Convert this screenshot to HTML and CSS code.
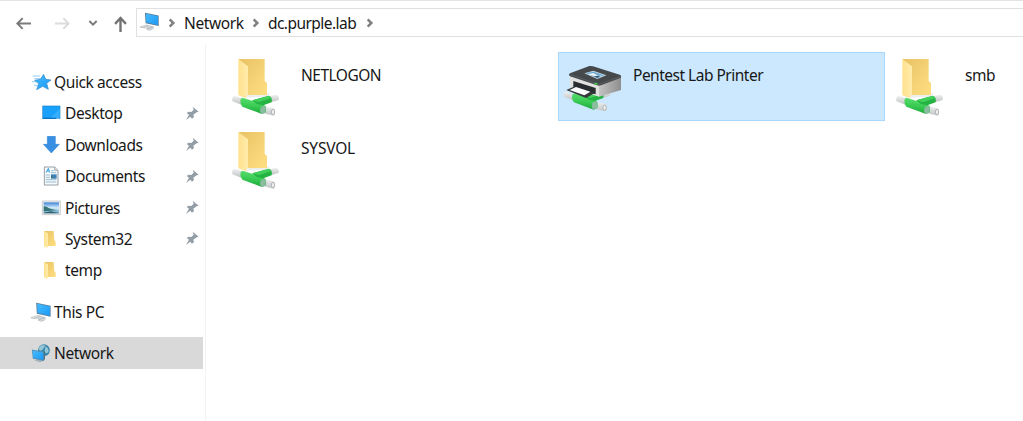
FILE: index.html
```html
<!DOCTYPE html>
<html lang="en">
<head>
<meta charset="utf-8">
<title>dc.purple.lab</title>
<link rel="stylesheet" href="styles.css">
</head>
<body>
<svg class="defs" aria-hidden="true">
  <defs>
    <linearGradient id="gold" x1="0" y1="0" x2="1" y2="1"><stop offset="0" stop-color="#e8c264"/><stop offset="1" stop-color="#ffdf83"/></linearGradient>
    <linearGradient id="flap" x1="0" y1="0" x2="1" y2="0"><stop offset="0" stop-color="#ffe18c"/><stop offset="1" stop-color="#ffebac"/></linearGradient>
    <linearGradient id="blue" x1="0" y1="0" x2="1" y2="1"><stop offset="0" stop-color="#46bdff"/><stop offset="1" stop-color="#1b98f5"/></linearGradient>
    <linearGradient id="green" x1=".55" y1="0" x2=".4" y2="1"><stop offset="0" stop-color="#5ddf72"/><stop offset=".5" stop-color="#3acc54"/><stop offset="1" stop-color="#19a43a"/></linearGradient>
    <linearGradient id="pipe" x1="0" y1="0" x2="0" y2="1"><stop offset="0" stop-color="#f0f0f0"/><stop offset="1" stop-color="#c0c4c5"/></linearGradient>
    <linearGradient id="sky" x1="0" y1="0" x2="0" y2="1"><stop offset="0" stop-color="#3d83da"/><stop offset=".5" stop-color="#d5edfa"/><stop offset="1" stop-color="#5e9fc0"/></linearGradient>
    <linearGradient id="side" x1="0" y1="0" x2="1" y2="0"><stop offset="0" stop-color="#c4c4c4"/><stop offset="1" stop-color="#8e8e8e"/></linearGradient>
  </defs>
  <symbol id="pin" viewBox="495 136 42 45">
    <path d="M518 138L536 153L530 155L520 162L522 169L516 174L511 168L498 178L507 162L500 157L506 153L514 154L521 147Z" fill="#929da6"/>
  </symbol>
  <symbol id="pipes" viewBox="30 143 150 72">
    <path d="M150 153L169 149Q180 154 176 165L155 171Z" fill="url(#pipe)"/>
    <path d="M66 160L43 152Q34 156 37 169L64 179Z" fill="url(#pipe)"/>
    <path d="M130 183L162 190Q169 199 162 212L127 204Z" fill="url(#pipe)"/>
    <ellipse cx="159" cy="201" rx="5" ry="8" fill="#eee" stroke="#b2b6b8" stroke-width="3"/>
    <path d="M68 158L132 179Q141 185 137 202L126 207L67 185Q59 176 62 162Z" fill="url(#green)"/>
    <path d="M96 166L147 152Q158 157 155 172L130 181L112 178Z" fill="#25b443"/>
    <path d="M98 166L147 152L154 159L116 172Z" fill="#43cf5b"/>
    <path d="M122 188Q126 180 138 184L136 203L126 207Q117 201 122 188Z" fill="#8abca0"/>
  </symbol>
  <symbol id="shared" viewBox="30 33 156 186">
    <path d="M72 146L149 145L142 155L80 158Z" fill="#eee"/>
    <path d="M56 42H134V107L141 115V150H84L56 42Z" fill="url(#gold)"/>
    <path d="M55 42L84 64V145L78 160L55 151Z" fill="url(#flap)"/>
    <use href="#pipes" x="30" y="143" width="150" height="72"/>
  </symbol>
  <symbol id="pc" viewBox="30 35 64 58">
    <path d="M31 80L53 73L76 80L74 87L63 92L53 89L54 85L34 83Z" fill="#bcc1c5"/>
    <path d="M38 81L54 76M47 84L65 79M58 89L73 84" stroke="#edf0f1" stroke-width="2" fill="none"/>
    <path d="M48 37L90 46V78L50 69Z" fill="#567f9b"/>
    <path d="M51 40L88 48V75L52 66Z" fill="url(#blue)"/>
  </symbol>
  <symbol id="folder" viewBox="69 205 42 60">
    <path d="M73 211H101L103 238L107 243V256H83Z" fill="url(#gold)"/>
    <path d="M72 211L84 218V257L81 262L72 256Z" fill="url(#flap)"/>
  </symbol>
  <symbol id="chev" viewBox="0 0 24 30"><path d="M5 4L16 15L5 26" fill="none" stroke="#808080" stroke-width="7.5"/></symbol>
</svg>

<main class="window">
  <header class="toolbar">
    <nav class="nav">
      <svg class="arrow back" viewBox="50 50 48 38"><path d="M95 69H56M70 53L54 69L70 85" fill="none" stroke="#7b7b7b" stroke-width="6"/></svg>
      <svg class="arrow forward" viewBox="162 50 48 38"><path d="M165 69H204M190 53L206 69L190 85" fill="none" stroke="#dcdcdc" stroke-width="6"/></svg>
      <svg class="recent" viewBox="266 58 30 22"><path d="M270 63L281 74L292 63" fill="none" stroke="#7b7b7b" stroke-width="6"/></svg>
      <svg class="up" viewBox="342 48 38 50"><path d="M361 95V55M345 71L361 54L377 71" fill="none" stroke="#737373" stroke-width="7"/></svg>
    </nav>
    <div class="address">
      <svg class="address-pc"><use href="#pc"/></svg>
      <svg class="chev first"><use href="#chev"/></svg>
      <span class="crumb network">Network</span>
      <svg class="chev"><use href="#chev"/></svg>
      <span class="crumb host">dc.purple.lab</span>
      <svg class="chev"><use href="#chev"/></svg>
    </div>
  </header>
  <div class="body">
    <aside class="sidebar">
      <div class="row top">
        <svg class="icon" viewBox="36 38 60 54"><path d="M38 47H60M43 55H62M36 64H48M42 75H53" stroke="#94cef1" stroke-width="3"/><path d="M71 42L77 57L93 59L80 69L85 87L68 78L50 88L56 70L44 60L61 57Z" fill="url(#blue)" stroke="#3189c9" stroke-width="2"/></svg>
        <span>Quick access</span>
      </div>
      <div class="row">
        <svg class="icon" viewBox="62 133 60 54"><path d="M66 138H120V178H66Z" fill="#1683cf"/><path d="M68 140H118V174H68Z" fill="#18a0fb"/><path d="M91 174L118 147V174Z" fill="#36adfd"/><path d="M68 176H107" stroke="#0873bb" stroke-width="3"/><path d="M108 176H118" stroke="#b5e1fc" stroke-width="2"/></svg>
        <span>Desktop</span><svg class="pin"><use href="#pin"/></svg>
      </div>
      <div class="row">
        <svg class="icon" viewBox="62 225 60 54"><path d="M81 226H105V250H117L93 276L69 250H81Z" fill="#398fe4" stroke="#237bcb" stroke-width="1.5"/></svg>
        <span>Downloads</span><svg class="pin"><use href="#pin"/></svg>
      </div>
      <div class="row">
        <svg class="icon tall" viewBox="62 16 60 60"><path d="M72 19H103L113 29V73H72Z" fill="#f9fafb" stroke="#858f95" stroke-width="2.5"/><path d="M103 19V29H113" fill="#ddd" stroke="#899196" stroke-width="2"/><path d="M77 36L84 23L88 36M80 31H87" stroke="#1793de" stroke-width="2.5" fill="none"/><path d="M92 30H100M92 36H108M76 43H89M76 50H89M76 57H108M76 64H108" stroke="#83aecb" stroke-width="2.5"/><path d="M92 41H109V54H92Z" fill="#3d81b6"/><path d="M92 46L101 51H92Z" fill="#397668"/></svg>
        <span>Documents</span><svg class="pin"><use href="#pin"/></svg>
      </div>
      <div class="row">
        <svg class="icon" viewBox="62 112 60 54"><path d="M66 118H120V159H66Z" fill="#f3f3f3" stroke="#b4b7ba" stroke-width="2"/><path d="M70 122H116V155H70Z" fill="url(#sky)"/><path d="M70 134Q80 134 86 140Q99 144 111 146L70 149Z" fill="#347377"/><path d="M70 153L91 149L116 155H70Z" fill="#306070"/></svg>
        <span>Pictures</span><svg class="pin"><use href="#pin"/></svg>
      </div>
      <div class="row"><svg class="folder"><use href="#folder"/></svg><span>System32</span><svg class="pin"><use href="#pin"/></svg></div>
      <div class="row"><svg class="folder"><use href="#folder"/></svg><span>temp</span></div>
      <div class="row top this-pc"><svg class="icon pc-icon"><use href="#pc"/></svg><span>This PC</span></div>
      <div class="row top selected">
        <svg class="icon network-icon" viewBox="34 161 60 58"><path d="M44 211L60 206L72 212L61 217Z" fill="#a6b1b8"/><circle cx="73" cy="180" r="18" fill="#3686aa"/><path d="M59 170Q69 161 77 166L70 177L63 182L57 178ZM78 168Q89 175 87 186L79 190L75 181Z" fill="#94c6d5"/><path d="M36 178L73 185V213L39 206Z" fill="#5290b6"/><path d="M39 181L71 188V209L40 202Z" fill="url(#blue)"/><path d="M72 188L76 184V207L72 213Z" fill="#477085"/></svg>
        <span>Network</span>
      </div>
    </aside>
    <section class="files">
      <article class="file"><svg class="share"><use href="#shared"/></svg><span class="name">NETLOGON</span></article>
      <article class="file active">
        <svg class="printer" viewBox="36 56 183 150">
          <use href="#pipes" x="35" y="129" width="150" height="72"/>
          <path d="M60 85L147 118V154L60 126Z" fill="#e1e1df"/>
          <path d="M147 119L213 94V134L147 154Z" fill="url(#side)"/>
          <path d="M60 84L118 62Q123 61 129 63L209 88Q218 93 209 99L153 120Q147 122 141 120L60 93Q54 88 60 84Z" fill="#46494c"/>
          <path d="M61 88L146 117L211 94" fill="none" stroke="#61676a" stroke-width="2"/>
          <path d="M70 107L137 128V147L70 127Z" fill="#292d2f"/>
          <path d="M49 134L75 123L134 143L108 158Z" fill="#34383a"/>
          <path d="M59 134L78 125L121 139L103 150Z" fill="#fff"/>
          <path d="M103 84L130 76L169 90L142 101Z" fill="#c6d8e2"/>
          <path d="M108 84L130 79L163 90L142 98Z" fill="#6da7d0"/>
          <path d="M113 87L130 83L146 92L158 90L142 98Z" fill="#e8f4f8"/>
          <path d="M119 88L133 93L143 91L151 94L142 98Z" fill="#315d79"/>
          <ellipse cx="138" cy="115" rx="5" ry="2.5" fill="#42d64f"/>
        </svg>
        <span class="name printer-name">Pentest Lab Printer</span>
      </article>
      <article class="file"><svg class="share"><use href="#shared"/></svg><span class="name">smb</span></article>
      <article class="file"><svg class="share"><use href="#shared"/></svg><span class="name sysvol">SYSVOL</span></article>
    </section>
  </div>
</main>
</body>
</html>
```
FILE: styles.css
```css
* { box-sizing: border-box; }
body { margin: 0; background: #fff; color: #171717; font: 15.5px/20px "Noto Sans", sans-serif; letter-spacing: -.4px; }
svg { display: block; flex: none; }
span { white-space: nowrap; }
.defs { position: absolute; width: 0; height: 0; }
.window { width: 1023px; height: 421px; overflow: hidden; border-top: 1px solid #e3e3e3; }
.toolbar { display: flex; height: 43px; padding-top: 7px; }
.nav { display: flex; width: 136px; height: 30px; align-items: center; padding-left: 16px; }
.arrow { width: 16px; height: 13px; }
.forward { margin-left: 22px; }
.recent { width: 10px; height: 8px; margin-left: 18px; }
.up { width: 13px; height: 17px; margin-left: 16px; margin-top: 2px; }
.address { display: flex; flex: 1; align-items: center; height: 29px; border: 1px solid #e0e0e0; border-right: 0; padding-left: 2px; }
.address-pc { width: 21px; height: 19px; margin-top: -2px; }
.chev { width: 8px; height: 10px; margin-left: 8px; }
.chev.first { margin-left: 8px; }
.crumb { margin-left: 8px; }
.network { width: 60px; }
.host { width: 90px; letter-spacing: -.55px; }
.body { display: flex; height: 377px; }
.sidebar { width: 206px; padding-top: 22.3px; border-right: 1px solid #f3f3f3; }
.row { display: flex; align-items: center; width: 203px; height: 31.4px; padding-left: 41px; }
.row.top { padding-left: 32px; }
.icon { width: 20px; height: 18px; }
.icon.tall { height: 20px; }
.row > span { margin-left: 4px; }
.row.top > span { margin-left: 2px; }
.folder { width: 14px; height: 20px; margin: 0 4px 0 2px; }
.pin { width: 14px; height: 15px; margin-left: auto; margin-right: 4px; }
.this-pc { margin-top: 10.5px; }
.pc-icon { width: 22px; height: 20px; margin-left: -2px; }
.network-icon { width: 20px; height: 19px; margin-left: -1px; margin-right: 1px; }
.selected { margin-top: 9.5px; background: #d9d9d9; height: 32px; }
.files { display: grid; grid-template-columns: 327px 327px 327px; grid-auto-rows: 69px; column-gap: 5px; row-gap: 4px; padding: 8px 0 0 20px; width: 817px; }
.file { display: flex; align-items: flex-start; padding-top: 4px; padding-left: 4px; }
.share { width: 52px; height: 62px; }
.name { margin: 9px 0 0 19px; letter-spacing: -.5px; }
.sysvol { letter-spacing: -.2px; }
.active { background: #cce8ff; border: 1px solid #a8d8ff; padding-top: 3px; }
.printer { width: 61px; height: 50px; margin: 8px 0 0 -1px; }
.printer-name { margin: 9px 0 0 10px; }
```
